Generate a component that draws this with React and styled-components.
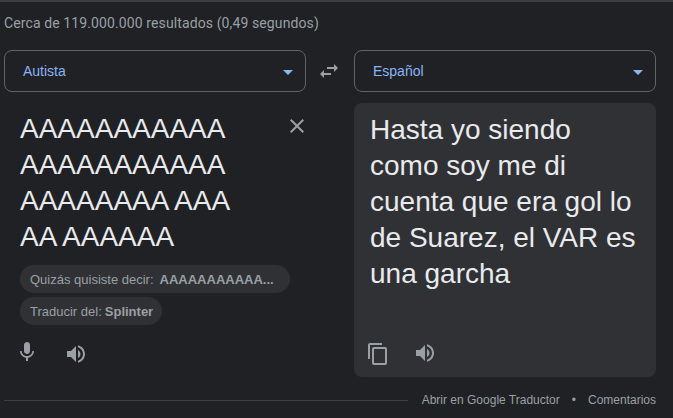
import React from "react";
import styled, { createGlobalStyle } from "styled-components";

const GlobalStyle = createGlobalStyle`
  html, body {
    margin: 0;
    padding: 0;
    background: #202124;
  }
`;

const Page = styled.div`
  box-sizing: border-box;
  width: 673px;
  height: 418px;
  overflow: hidden;
  padding: 14px 17px 0 4px;
  background: #202124;
  border-top: 2px solid #3c4043;
  font-family: "Liberation Sans", Arial, sans-serif;
`;

const Stats = styled.div`
  font-family: Roboto, sans-serif;
  font-size: 14px;
  line-height: 14px;
  letter-spacing: 0.11px;
  color: #9aa0a6;
  margin-bottom: 20px;
`;

const Grid = styled.div`
  display: grid;
  grid-template-columns: 302px 48px 302px;
  grid-template-rows: 42px 274px;
  row-gap: 11px;
`;

const Select = styled.div`
  box-sizing: border-box;
  display: flex;
  align-items: center;
  justify-content: space-between;
  padding: 0 12px 0 18px;
  border: 1px solid #5f6368;
  border-radius: 8px;
  font-size: 14px;
  color: #8ab4f8;
`;

const Caret = styled.span`
  width: 0;
  height: 0;
  margin-top: 2px;
  border-left: 5px solid transparent;
  border-right: 5px solid transparent;
  border-top: 5px solid #8ab4f8;
`;

const SwapCell = styled.div`
  display: flex;
  align-items: center;
  justify-content: center;
  padding-right: 2px;
  color: #9aa0a6;
`;

const Source = styled.div`
  grid-column: 1 / 3;
  width: 302px;
  display: flex;
  flex-direction: column;
  padding-left: 16px;
  box-sizing: border-box;
`;

const SourceRow = styled.div`
  display: flex;
  justify-content: space-between;
  height: 162px;
`;

const BigText = styled.div`
  font-size: 28px;
  line-height: 36px;
  color: #e8eaed;
  white-space: pre-line;
  padding-top: ${(p) => p.$top}px;
`;

const CloseIcon = styled.div`
  color: #9aa0a6;
  margin-right: -3px;
  padding-top: 11px;
`;

const Chip = styled.div`
  box-sizing: border-box;
  align-self: flex-start;
  display: flex;
  align-items: center;
  height: 28px;
  padding: 0 ${(p) => p.$end}px 0 10px;
  margin-bottom: 4px;
  border-radius: 14px;
  background: #303134;
  font-size: 13px;
  color: #9aa0a6;
  white-space: nowrap;
`;

const ChipStrong = styled.b`
  color: #9aa0a6;
  margin-left: ${(p) => p.$gap}px;
`;

const Icons = styled.div`
  display: flex;
  align-items: flex-start;
  gap: ${(p) => p.$gap}px;
  color: #9aa0a6;
  margin-top: ${(p) => p.$top}px;
  margin-left: ${(p) => p.$left}px;
`;

const IconSlot = styled.div`
  margin-top: ${(p) => p.$drop || 0}px;
`;

const Output = styled.div`
  grid-column: 3;
  box-sizing: border-box;
  display: flex;
  flex-direction: column;
  justify-content: space-between;
  padding: 0 16px 11px;
  border-radius: 8px;
  background: #303134;
`;

const Footer = styled.div`
  display: flex;
  align-items: center;
  margin-top: 8px;
  height: 30px;
  width: 652px;
  font-size: 12px;
  color: #9aa0a6;
`;

const Rule = styled.div`
  flex: 1;
  height: 1px;
  background: #3c4043;
  margin: 0 14px 0 0;
`;

const Dot = styled.span`
  margin: 0 12px;
`;

const Icon = ({ d, size = 24 }) => (
  <svg width={size} height={size} viewBox="0 0 24 24" fill="currentColor" style={{ display: "block" }}>
    <path d={d} />
  </svg>
);

const SWAP = "M6.99 11L3 15l3.99 4v-3H14v-2H6.99v-3zM21 9l-3.99-4v3H10v2h7.01v3L21 9z";
const CLOSE = "M19 6.41L17.59 5 12 10.59 6.41 5 5 6.41 10.59 12 5 17.59 6.41 19 12 13.41 17.59 19 19 17.59 13.41 12z";
const MIC = "M12 14c1.66 0 2.99-1.34 2.99-3L15 5c0-1.66-1.34-3-3-3S9 3.34 9 5v6c0 1.66 1.34 3 3 3zm5.3-3c0 3-2.54 5.1-5.3 5.1S6.7 14 6.7 11H5c0 3.41 2.72 6.23 6 6.72V21h2v-3.28c3.28-.48 6-3.3 6-6.72h-1.7z";
const VOLUME = "M3 9v6h4l5 5V4L7 9H3zm13.5 3c0-1.77-1.02-3.29-2.5-4.03v8.05c1.48-.73 2.5-2.25 2.5-4.02zM14 3.23v2.06c2.89.86 5 3.54 5 6.71s-2.11 5.85-5 6.71v2.06c4.01-.91 7-4.49 7-8.77s-2.99-7.86-7-8.77z";
const COPY = "M16 1H4c-1.1 0-2 .9-2 2v14h2V3h12V1zm3 4H8c-1.1 0-2 .9-2 2v14c0 1.1.9 2 2 2h11c1.1 0 2-.9 2-2V7c0-1.1-.9-2-2-2zm0 16H8V7h11v14z";

const App = () => {
  return (
    <Page>
      <GlobalStyle />
      <Stats>Cerca de 119.000.000 resultados (0,49 segundos)</Stats>
      <Grid>
        <Select>
          Autista
          <Caret />
        </Select>
        <SwapCell>
          <Icon d={SWAP} />
        </SwapCell>
        <Select>
          Español
          <Caret />
        </Select>
        <Source>
          <SourceRow>
            <BigText $top={8}>{"AAAAAAAAAAA\nAAAAAAAAAAA\nAAAAAAAA AAA\nAA AAAAAA"}</BigText>
            <CloseIcon>
              <Icon d={CLOSE} />
            </CloseIcon>
          </SourceRow>
          <Chip $end={16}>
            Quizás quisiste decir:
            <ChipStrong $gap={6}>AAAAAAAAAAA...</ChipStrong>
          </Chip>
          <Chip $end={9}>
            Traducir del:
            <ChipStrong $gap={3}>Splinter</ChipStrong>
          </Chip>
          <Icons $gap={25} $top={11} $left={-5}>
            <IconSlot>
              <Icon d={MIC} />
            </IconSlot>
            <IconSlot $drop={2}>
              <Icon d={VOLUME} />
            </IconSlot>
          </Icons>
        </Source>
        <Output>
          <BigText $top={9}>{"Hasta yo siendo\ncomo soy me di\ncuenta que era gol lo\nde Suarez, el VAR es\nuna garcha"}</BigText>
          <Icons $gap={23} $top={0} $left={-4}>
            <IconSlot $drop={1}>
              <Icon d={COPY} />
            </IconSlot>
            <IconSlot>
              <Icon d={VOLUME} />
            </IconSlot>
          </Icons>
        </Output>
      </Grid>
      <Footer>
        <Rule />
        Abrir en Google Traductor
        <Dot>•</Dot>
        Comentarios
      </Footer>
    </Page>
  );
};

export default App;
